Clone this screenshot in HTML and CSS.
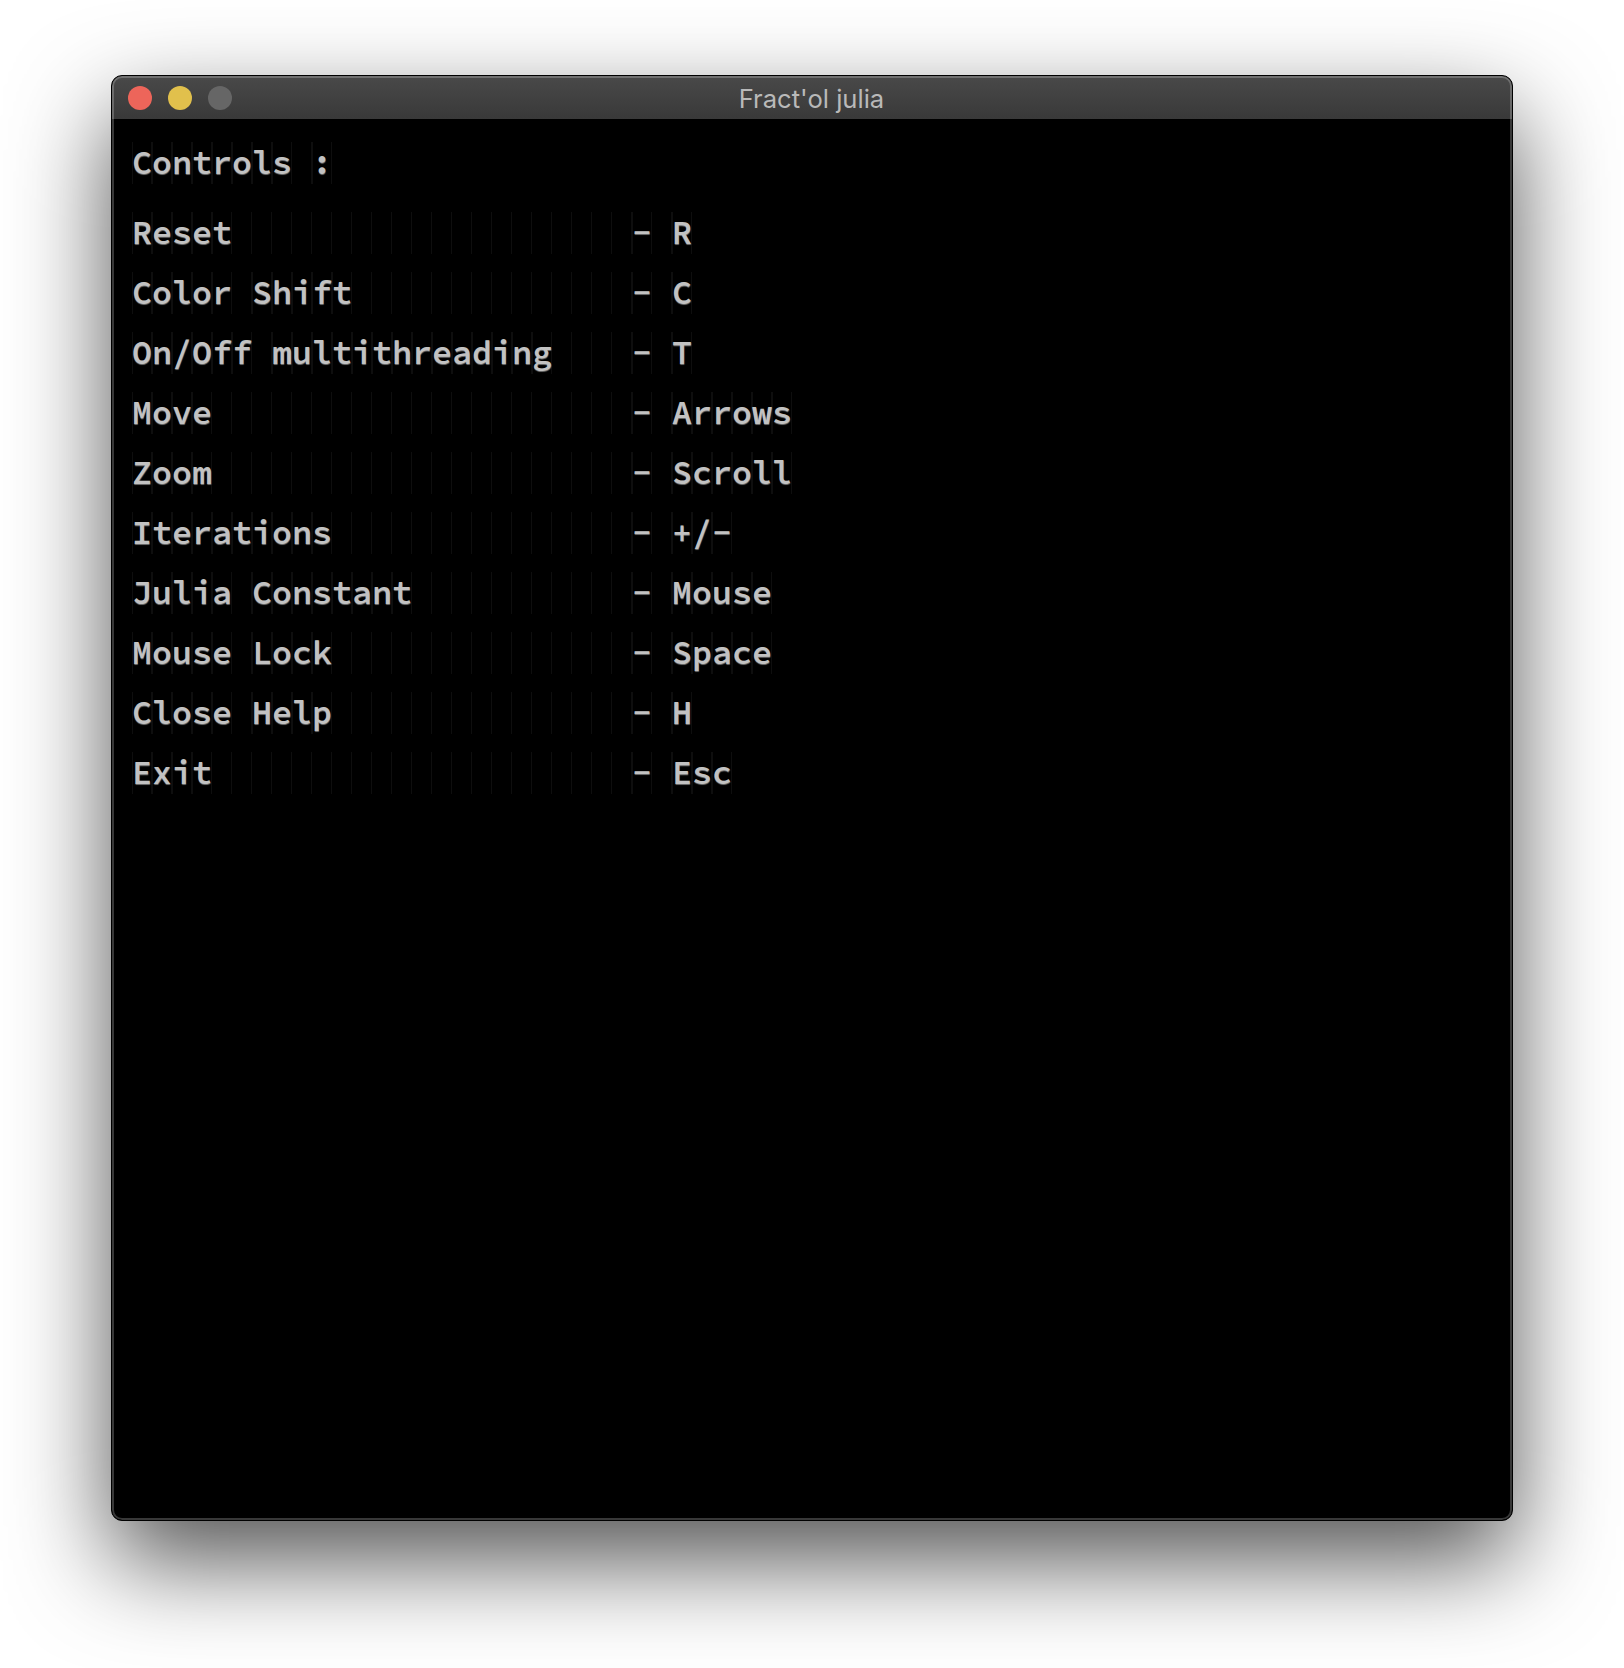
FILE: index.html
```html
<!DOCTYPE html>
<html lang="en">
<head>
<meta charset="utf-8">
<title>Fract'ol julia</title>
<link rel="stylesheet" href="styles.css">
</head>
<body>
<main class="window">
  <header class="titlebar">
    <div class="buttons"><i class="dot close"></i><i class="dot minimize"></i><i class="dot zoom"></i></div>
    <h1 class="title">Fract'ol julia</h1>
  </header>
  <section class="screen">
    <div class="row heading"><span><b>Controls</b> <b>:</b></span></div>
    <div class="row"><span class="label"><b>Reset</b></span><span class="dash"><b>-</b></span><b>R</b></div>
    <div class="row"><span class="label"><b>Color</b> <b>Shift</b></span><span class="dash"><b>-</b></span><b>C</b></div>
    <div class="row"><span class="label"><b>On/Off</b> <b>multithreading</b></span><span class="dash"><b>-</b></span><b>T</b></div>
    <div class="row"><span class="label"><b>Move</b></span><span class="dash"><b>-</b></span><b>Arrows</b></div>
    <div class="row"><span class="label"><b>Zoom</b></span><span class="dash"><b>-</b></span><b>Scroll</b></div>
    <div class="row"><span class="label"><b>Iterations</b></span><span class="dash"><b>-</b></span><b>+/-</b></div>
    <div class="row"><span class="label"><b>Julia</b> <b>Constant</b></span><span class="dash"><b>-</b></span><b>Mouse</b></div>
    <div class="row"><span class="label"><b>Mouse</b> <b>Lock</b></span><span class="dash"><b>-</b></span><b>Space</b></div>
    <div class="row"><span class="label"><b>Close</b> <b>Help</b></span><span class="dash"><b>-</b></span><b>H</b></div>
    <div class="row"><span class="label"><b>Exit</b></span><span class="dash"><b>-</b></span><b>Esc</b></div>
  </section>
</main>
</body>
</html>
```
FILE: styles.css
```css
* { box-sizing: border-box; }
body {
  margin: 0;
  padding: 75px 111px 0;
  min-height: 1668px;
  background: #fff;
}
.window {
  position: relative;
  width: 1402px;
  height: 1446px;
  border: 1px solid #000;
  border-radius: 11px;
  overflow: hidden;
  background: #000;
  box-shadow: 0 40px 98px rgba(0, 0, 0, .68);
}
.window::after {
  content: "";
  position: absolute;
  inset: 0;
  border: 2px solid rgba(255, 255, 255, .22);
  border-radius: 10px;
}
.titlebar {
  display: grid;
  grid-template-columns: 1fr auto 1fr;
  align-items: center;
  height: 43px;
  padding: 0 17px 0 16px;
  background: linear-gradient(#494949, #393939);
}
.buttons { display: flex; gap: 16px; }
.dot { width: 24px; height: 24px; border-radius: 50%; }
.close { background: #ed655a; }
.minimize { background: #e1c04c; }
.zoom { background: #666; }
.title {
  margin: 0;
  padding-top: 2px;
  font: 400 25.6px/41px Inter, Roboto, sans-serif;
  color: #b9b9b9;
}
.screen {
  padding: 23px 20px;
  color: #c2c2c2;
  text-shadow: .3px .8px .7px rgba(194, 194, 194, .55);
  font: 600 33.333px/40px "Source Code Pro", "Liberation Mono", monospace;
}
.row {
  display: flex;
  width: fit-content;
  height: 42px;
  margin-bottom: 18px;
  white-space: pre;
  background: repeating-linear-gradient(90deg, transparent 0 19px, #0e0e0e 19px 20px);
}
.row.heading { margin-bottom: 28px; }
.row b {
  display: inline-block;
  height: 42px;
  font-weight: 600;
  background: repeating-linear-gradient(90deg, #0e0e0e 0 1px, transparent 1px 19px, #0e0e0e 19px 20px);
}
.label { width: 500px; }
.dash { width: 40px; }
```
